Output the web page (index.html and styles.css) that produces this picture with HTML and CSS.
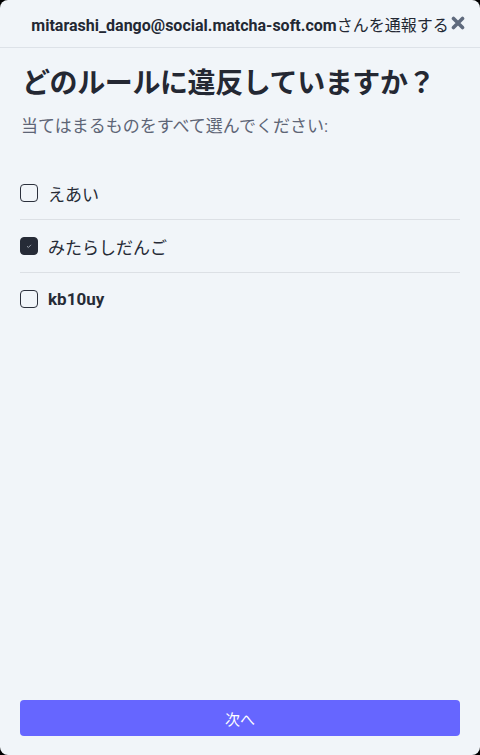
FILE: index.html
```html
<!DOCTYPE html>
<html lang="ja">
<head>
<meta charset="utf-8">
<title>通報</title>
<link rel="stylesheet" href="styles.css">
</head>
<body>
<div class="modal">
  <header class="modal-header">
    <div class="title"><b>mitarashi_dango@social.matcha-soft.com</b>さんを通報する</div>
    <button class="close" aria-label="閉じる">
      <svg viewBox="0 0 14 14" width="14" height="14"><path d="M2.5 2.5 L11.5 11.5 M11.5 2.5 L2.5 11.5" stroke="#5f6a7d" stroke-width="3.6" stroke-linecap="round"/></svg>
    </button>
  </header>
  <main class="content">
    <h1 class="heading">どのルールに違反していますか？</h1>
    <p class="subtitle">当てはまるものをすべて選んでください:</p>
    <ul class="rules">
      <li class="rule"><span class="box"></span><span class="label">えあい</span></li>
      <li class="rule"><span class="box checked"><svg viewBox="0 0 10 10" width="10" height="10"><path d="M3 5.2 L4.4 6.5 L7 3.8" stroke="#9aa0ab" stroke-width="1" fill="none"/></svg></span><span class="label">みたらしだんご</span></li>
      <li class="rule"><span class="box"></span><span class="label bold">kb10uy</span></li>
    </ul>
  </main>
  <footer class="footer">
    <button class="next">次へ</button>
  </footer>
</div>
</body>
</html>
```
FILE: styles.css
```css
html, body {
  margin: 0;
  padding: 0;
  background: #000;
}
body {
  font-family: Roboto, "Noto Sans CJK JP", sans-serif;
  color: #232833;
}
.modal {
  height: 755px;
  background: #f1f5f9;
  border-radius: 8px;
  display: flex;
  flex-direction: column;
  overflow: hidden;
}
.modal-header {
  position: relative;
  height: 47px;
  border-bottom: 1px solid #dde2e8;
  display: flex;
  align-items: center;
  justify-content: center;
  flex-shrink: 0;
}
.title {
  font-size: 16px;
  color: #232833;
  white-space: nowrap;
  margin-top: 1px;
}
.title b {
  font-weight: 700;
}
.close {
  position: absolute;
  right: 0;
  top: 0;
  width: 45px;
  height: 47px;
  border: 0;
  background: transparent;
  padding: 0;
  display: flex;
  align-items: center;
  justify-content: center;
}
.close svg {
  display: block;
  margin-top: -1px;
}
.content {
  padding: 0 20px;
  flex: 1;
}
.heading {
  margin: 18px 0 0 2px;
  font-size: 28px;
  line-height: 36px;
  font-weight: 700;
  color: #242833;
  letter-spacing: -0.4px;
}
.subtitle {
  margin: 12px 0 0 1px;
  font-size: 17px;
  line-height: 24px;
  color: #5e6576;
}
.rules {
  list-style: none;
  margin: 29px 0 0;
  padding: 0;
}
.rule {
  height: 52px;
  display: flex;
  align-items: center;
  gap: 10px;
  border-bottom: 1px solid #dce0e5;
}
.rule:last-child {
  border-bottom: 0;
}
.box {
  width: 18px;
  height: 18px;
  box-sizing: border-box;
  border: 1.5px solid #2b303c;
  border-radius: 4px;
  display: flex;
  align-items: center;
  justify-content: center;
  flex-shrink: 0;
}
.box.checked {
  background: #262b37;
  border-color: #262b37;
}
.box svg {
  display: block;
}
.label {
  font-size: 17px;
  color: #262b36;
}
.label.bold {
  font-weight: 700;
}
.footer {
  padding: 0 20px 19px;
}
.next {
  width: 100%;
  height: 36px;
  border: 0;
  border-radius: 4px;
  background: #6666ff;
  color: #fff;
  font-family: Roboto, "Noto Sans CJK JP", sans-serif;
  font-size: 15px;
  display: block;
}
```
